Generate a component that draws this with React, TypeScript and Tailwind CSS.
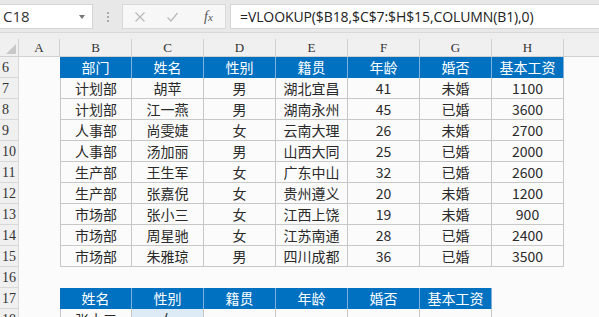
import React from 'react';

const cols = ['B', 'C', 'D', 'E', 'F', 'G', 'H'];

const header = ['部门', '姓名', '性别', '籍贯', '年龄', '婚否', '基本工资'];

const rows: string[][] = [
  ['计划部', '胡苹', '男', '湖北宜昌', '41', '未婚', '1100'],
  ['计划部', '江一燕', '男', '湖南永州', '45', '已婚', '3600'],
  ['人事部', '尚雯婕', '女', '云南大理', '26', '未婚', '2700'],
  ['人事部', '汤加丽', '男', '山西大同', '25', '已婚', '2000'],
  ['生产部', '王生军', '女', '广东中山', '32', '已婚', '2600'],
  ['生产部', '张嘉倪', '女', '贵州遵义', '20', '未婚', '1200'],
  ['市场部', '张小三', '女', '江西上饶', '19', '未婚', '900'],
  ['市场部', '周星驰', '女', '江苏南通', '28', '已婚', '2400'],
  ['市场部', '朱雅琼', '男', '四川成都', '36', '已婚', '3500'],
];

const lookupHeader = ['姓名', '性别', '籍贯', '年龄', '婚否', '基本工资'];

const cjk = "font-['Microsoft_YaHei','Noto_Sans_CJK_SC',sans-serif]";

function RowHead({ n }: { n: number | string }) {
  return (
    <div className="w-[19px] shrink-0 h-full bg-[#f0f0f0] border-r border-b border-[#d8d8d8] text-[14px] leading-[21px] pl-[2px] text-[#333] font-['Liberation_Serif',serif]">
      {n}
    </div>
  );
}

function ColA() {
  return <div className="w-[41px] shrink-0 h-full" />;
}

function BlueCell({ text }: { text: string }) {
  return (
    <div
      className={`w-[72px] shrink-0 h-full bg-[#0070c0] text-white text-[14px] leading-[20px] text-center border-r border-[#7fb2dc] ${cjk}`}
    >
      {text}
    </div>
  );
}

function DataCell({ text, first, bg }: { text: string; first?: boolean; bg?: string }) {
  return (
    <div
      className={`w-[72px] shrink-0 h-full border-r border-b border-[#c8c8c8] text-[14px] leading-[20px] text-center text-[#2a2a2a] ${first ? 'border-l' : ''} ${bg ?? ''} ${cjk}`}
    >
      {text}
    </div>
  );
}

export default function App() {
  return (
    <div className="w-[599px] h-[317px] overflow-hidden bg-[#fbfbfb] flex flex-col">
      {/* formula bar */}
      <div className="h-[33px] shrink-0 bg-[#e8e8e8] flex items-center pt-[1px] border-b border-[#dadada]">
        <div className="w-[93px] h-[25px] bg-white border border-[#d4d4d4] border-l-0 flex items-center justify-between pl-[3px] pr-[7px]">
          <span className="text-[15px] text-[#333] font-['Open_Sans',sans-serif]">C18</span>
          <span className="w-0 h-0 border-l-[3.5px] border-r-[3.5px] border-t-[4px] border-l-transparent border-r-transparent border-t-[#777]" />
        </div>
        <div className="w-[29px] flex flex-col items-center gap-[2px]">
          <span className="w-[2px] h-[2px] bg-[#aaa]" />
          <span className="w-[2px] h-[2px] bg-[#aaa]" />
          <span className="w-[2px] h-[2px] bg-[#aaa]" />
        </div>
        <div className="w-[104px] h-[25px] bg-[#f7f7f7] border border-[#d9d9d9] flex items-center">
          <svg width="12" height="12" viewBox="0 0 12 12" className="ml-[11px]">
            <path d="M1.5 1.5 L10.5 10.5 M10.5 1.5 L1.5 10.5" stroke="#b8b8b8" strokeWidth="1.2" />
          </svg>
          <svg width="13" height="12" viewBox="0 0 13 12" className="ml-[20px]">
            <path d="M1.5 6.5 L5 10 L11.5 2" stroke="#b8b8b8" strokeWidth="1.2" fill="none" />
          </svg>
          <span className="ml-[25px] italic text-[14px] text-[#555] font-['Liberation_Serif',serif]">
            f<span className="text-[11px]">x</span>
          </span>
        </div>
        <div className="ml-[4px] flex-1 h-[25px] bg-white border border-[#d4d4d4] border-r-0 flex items-center pl-[9px]">
          <span className="text-[14px] text-[#222] tracking-[-0.1px] font-['Open_Sans',sans-serif]">
            =VLOOKUP($B18,$C$7:$H$15,COLUMN(B1),0)
          </span>
        </div>
      </div>

      <div className="h-[6px] shrink-0 bg-[#eeeeee]" />

      {/* column headers */}
      <div className="h-[18px] shrink-0 flex bg-[#f0f0f0] border-b border-[#d0d0d0] text-[13px] text-[#333] font-['Liberation_Serif',serif]">
        <div className="w-[19px] shrink-0 h-full border-r border-[#d0d0d0] flex items-end justify-end pr-[2px] pb-[2px]">
          <svg width="10" height="10" viewBox="0 0 10 10">
            <path d="M10 0 L10 10 L0 10 Z" fill="#c8c8c8" />
          </svg>
        </div>
        <div className="w-[41px] shrink-0 h-full border-r border-[#d0d0d0] text-center leading-[18px]">A</div>
        {cols.map((c) => (
          <div key={c} className="w-[72px] shrink-0 h-full border-r border-[#d0d0d0] text-center leading-[18px]">
            {c}
          </div>
        ))}
        <div className="flex-1" />
      </div>

      {/* row 6 header */}
      <div className="h-[21px] shrink-0 flex">
        <RowHead n={6} />
        <ColA />
        {header.map((h) => (
          <BlueCell key={h} text={h} />
        ))}
      </div>

      {rows.map((r, ri) => (
        <div key={ri} className="h-[21px] shrink-0 flex">
          <RowHead n={ri + 7} />
          <ColA />
          {r.map((v, i) => (
            <DataCell key={i} text={v} first={i === 0} />
          ))}
        </div>
      ))}

      <div className="h-[21px] shrink-0 flex">
        <RowHead n={16} />
      </div>

      <div className="h-[21px] shrink-0 flex">
        <RowHead n={17} />
        <ColA />
        {lookupHeader.map((h) => (
          <BlueCell key={h} text={h} />
        ))}
      </div>

      <div className="h-[21px] shrink-0 flex">
        <RowHead n={18} />
        <ColA />
        <DataCell text="张小三" first />
        <DataCell text="女" bg="bg-[#ddebf7]" />
        <DataCell text="" />
        <DataCell text="" />
        <DataCell text="" />
        <DataCell text="" />
      </div>
    </div>
  );
}
